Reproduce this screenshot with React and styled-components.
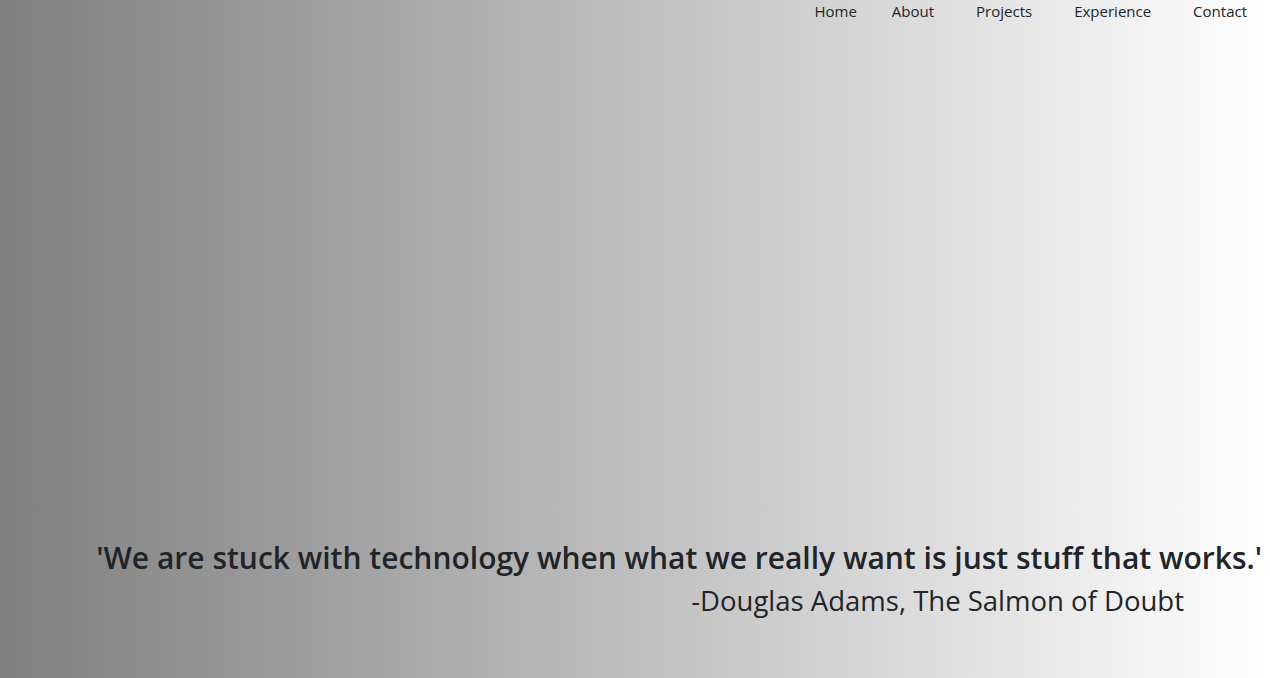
import React from 'react';
import styled, { createGlobalStyle } from 'styled-components';

const GlobalStyle = createGlobalStyle`
  html, body {
    margin: 0;
    padding: 0;
  }
  body {
    font-family: "Open Sans", "Noto Sans", sans-serif;
    color: #212529;
  }
`;

const links = ['Home', 'About', 'Projects', 'Experience', 'Contact'];

const App = () => {
  return (
    <>
      <GlobalStyle />
      <Page>
        <NavBar>
          {links.map((link) => (
            <NavLink key={link} href={`#${link.toLowerCase()}`}>
              {link}
            </NavLink>
          ))}
        </NavBar>
        <QuoteBlock>
          <Quote>'We are stuck with technology when what we really want is just stuff that works.'</Quote>
          <Author>-Douglas Adams, The Salmon of Doubt</Author>
        </QuoteBlock>
      </Page>
    </>
  );
};

const Page = styled.div`
  width: 100%;
  height: 678px;
  display: flex;
  flex-direction: column;
  justify-content: space-between;
  background: linear-gradient(to right, #7f7f7f, #ffffff);
  overflow: hidden;
`;

const NavBar = styled.nav`
  display: flex;
  justify-content: flex-end;
  gap: 40px;
  padding: 1px 22px 0 0;
`;

const NavLink = styled.a`
  font-size: 15px;
  line-height: 20px;
  color: #212529;
  text-decoration: none;
  padding: 0 1px;

  &:first-child {
    margin-right: -7px;
  }
`;

const QuoteBlock = styled.div`
  display: flex;
  flex-direction: column;
  align-items: flex-end;
  padding: 0 8px 56px 0;
`;

const Quote = styled.h2`
  margin: 0;
  font-size: 30px;
  font-weight: 600;
  line-height: 44px;
  white-space: nowrap;
`;

const Author = styled.h3`
  margin: 0 78px 0 0;
  font-size: 27.5px;
  font-weight: 500;
  line-height: 42px;
  white-space: nowrap;
`;

export default App;
